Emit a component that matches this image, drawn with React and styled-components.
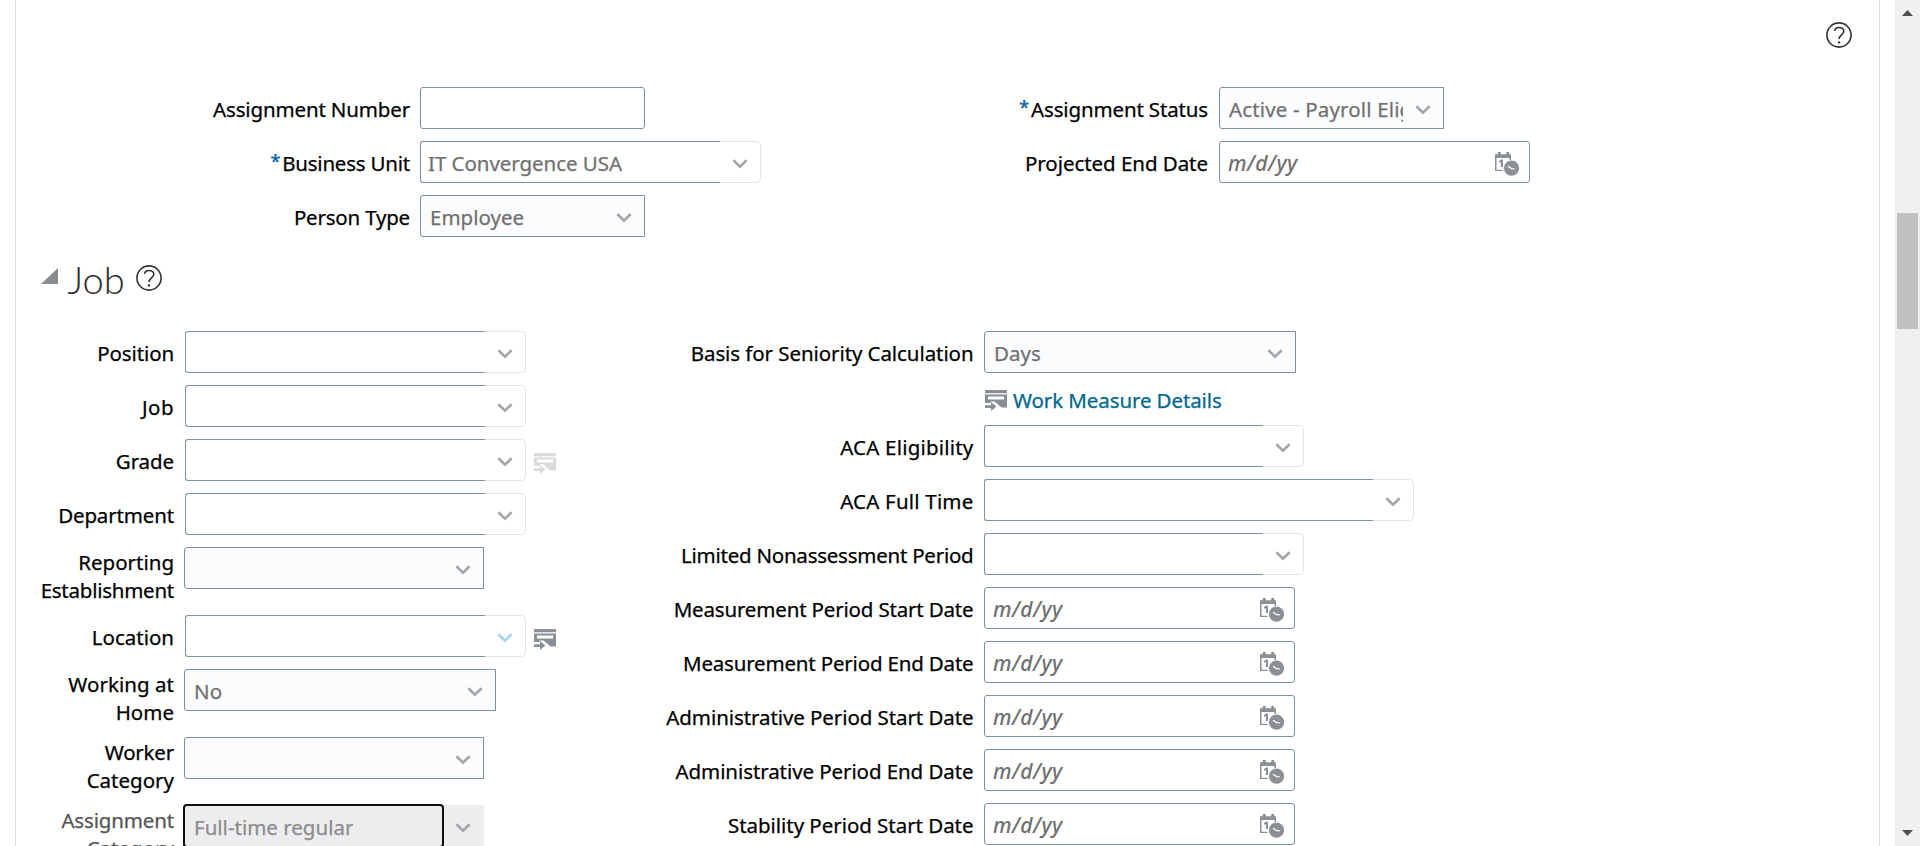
import React from "react";
import styled, { createGlobalStyle, css } from "styled-components";

const GlobalStyle = createGlobalStyle`
  * { box-sizing: border-box; }
  body {
    margin: 0;
    overflow: hidden;
    background: #fff;
    font-family: "Noto Sans", "Open Sans", sans-serif;
    font-size: 20.5px;
    line-height: 28px;
    color: #000;
  }
`;

const Page = styled.div`
  display: flex;
  height: 846px;
  overflow: hidden;
`;

const Panel = styled.main`
  flex: 1;
  min-width: 0;
  margin: 0 15px;
  border: solid #d8dfe6;
  border-width: 0 1px;
`;

const PanelHeader = styled.header`
  display: flex;
  justify-content: flex-end;
  height: 87px;
  padding: 21.5px 27px 0 0;
`;

const Form = styled.section`
  display: flex;
`;

const Column = styled.div`
  flex: none;
  width: ${(p) => p.$width}px;
`;

const Row = styled.div`
  display: flex;
  align-items: flex-start;
  height: ${(p) => p.$height || 54}px;
`;

const Label = styled.label`
  flex: none;
  width: ${(p) => p.$width}px;
  padding-top: ${(p) => (p.$tall ? 1 : 8)}px;
  margin-right: ${(p) => p.$gap}px;
  text-align: right;
  white-space: nowrap;
  color: ${(p) => (p.$muted ? "#555" : "#000")};
  -webkit-text-stroke: 0.25px;
`;

const Line = styled.span`
  display: block;
  letter-spacing: ${(p) => p.$track || 0}px;
`;

const Required = styled.span`
  margin-right: 2px;
  font-size: 18px;
  font-weight: 500;
  line-height: 0;
  vertical-align: 3px;
  color: #0a62a8;
`;

const fieldBox = css`
  display: flex;
  flex: none;
  height: 42px;
  width: ${(p) => p.$width}px;
`;

const TextBox = styled.div`
  ${fieldBox}
  border: 1px solid #7b929e;
  border-radius: 3px;
`;

const DateBox = styled(TextBox)`
  justify-content: space-between;
  padding: 0 10px 0 8px;
`;

const Placeholder = styled.span`
  padding-top: 7px;
  font-size: 21px;
  font-style: italic;
  font-weight: 500;
  letter-spacing: 0.45px;
  color: #707070;
`;

const SelectBox = styled.div`
  ${fieldBox}
  align-items: center;
  justify-content: space-between;
  padding: 0 12px 0 9px;
  margin-left: ${(p) => p.$shift || 0}px;
  border: 1px solid #7b929e;
  border-radius: 3px 0 0 3px;
  background: #fbfcfe;
`;

const Value = styled.span`
  width: ${(p) => (p.$width ? `${p.$width}px` : "auto")};
  padding-top: 2px;
  overflow: hidden;
  white-space: nowrap;
  letter-spacing: ${(p) => p.$track || 0}px;
  color: ${(p) => (p.$muted ? "#8c8c8c" : "#707070")};
  -webkit-text-stroke: 0.25px;
`;

const ComboBox = styled.div`
  ${fieldBox}
`;

const ComboInput = styled.div`
  display: flex;
  align-items: center;
  flex: 1;
  padding-left: 7px;
  border: solid #7b929e;
  border-width: 1px 0 1px 1px;
  border-radius: 3px 0 0 3px;
`;

const ComboButton = styled.div`
  display: flex;
  align-items: center;
  justify-content: flex-end;
  width: 41px;
  padding-right: 12px;
  border: solid #dfe5e9;
  border-width: 1px 1px 1px 0;
  border-radius: 0 5px 5px 0;
`;

const DisabledBox = styled.div`
  ${fieldBox}
  align-items: center;
  justify-content: space-between;
  padding-right: 13px;
  margin-left: -1px;
  background: #ededef;
`;

const FocusFrame = styled.div`
  display: flex;
  align-items: center;
  width: 261px;
  height: 44px;
  margin: -1px 0 -1px -1px;
  padding-left: 9px;
  border: 2px solid #101010;
  border-radius: 4px;
`;

const ChevronIcon = styled.svg`
  flex: none;
  margin-top: 3px;
`;

const IconSlot = styled.span`
  display: flex;
  padding: 14px 0 0 8px;
`;

const DateIconSlot = styled.span`
  display: flex;
  padding-top: 10px;
`;

const Link = styled.a`
  display: flex;
  gap: 6px;
  padding: 1px 0 0 1px;
  letter-spacing: -0.1px;
  color: #00688c;
  -webkit-text-stroke: 0.25px;
  svg { margin-top: 4px; }
`;

const SectionHeader = styled.div`
  display: flex;
  align-items: flex-start;
  height: 82px;
  padding: 2px 0 0 25px;
`;

const Disclosure = styled.svg`
  margin-top: 17px;
`;

const SectionTitle = styled.h2`
  margin: 4px 11px 0 9.5px;
  font: 300 38px/48px Lato, "Open Sans", sans-serif;
  color: #2b2b2b;
`;

const TitleHelp = styled.span`
  display: flex;
  padding-top: 13.5px;
`;

const Scrollbar = styled.aside`
  display: flex;
  flex-direction: column;
  justify-content: space-between;
  align-items: center;
  width: 25px;
  padding: 10px 0;
  background: #f0f0f0;
`;

const Thumb = styled.div`
  width: 21px;
  height: 116px;
  margin: 197px 0 auto;
  background: #c1c1c1;
`;

const Help = () => (
  <svg width="26" height="26" viewBox="0 0 26 26" fill="none" stroke="#35312f">
    <circle cx="13" cy="13" r="12.1" strokeWidth="1.6" />
    <path d="M8.6 8.900C8.900 6.700 10.600 5.500 13 5.500c2.900 0 4.800 1.500 4.800 3.800 0 3.500-4.700 3.900-4.700 7.700" strokeWidth="1.6" />
    <circle cx="13" cy="20.400" r="1.200" fill="#35312f" stroke="none" />
  </svg>
);

const Chevron = ({ color = "#a3a6a8" }) => (
  <ChevronIcon width="16" height="10" viewBox="0 0 16 10" fill="none">
    <path d="M1.400 1.200L8 7.600l6.600-6.400" stroke={color} strokeWidth="2.600" />
  </ChevronIcon>
);

const Details = ({ faded }) => (
  <svg width="22" height="21" viewBox="0 0 22 21" fill={faded ? "#d8dadb" : "#8a9095"}>
    <path d="M1 0h20q1 0 1 1v2.300H0V1q0-1 1-1z" />
    <path fillRule="evenodd" d="M0 4.500h22v13H16.500L9.500 11.500H5.500v1.500H0zM3 6.600v3h16v-3z" />
    <path d="M0 15.200h6v-3.200l5.400 4.600L6 21v-3H0z" />
  </svg>
);

const CalendarClock = () => (
  <svg width="24" height="24" viewBox="0 0 24 24">
    <path fill="#8a9095" d="M2.800 0h2.900v2.300h5.600V0h2.900v2.300H16V8h-1.500V6h-13v11.700h6V19H0V2.300h2.800z" />
    <path fill="#8a9095" d="M4 9l2.300-1.500H8V15H5.900V9.900L4 10.800z" />
    <circle cx="16.500" cy="16.200" r="7.600" fill="#8a9095" />
    <path d="M13 14.200l3.500 2.400 3.300.2" fill="none" stroke="#fff" strokeWidth="1.300" />
  </svg>
);

const Field = ({ f, labelWidth, gap }) => (
  <Row $height={f.height}>
    <Label $width={labelWidth} $gap={gap} $tall={f.lines.length !== 1} $muted={f.kind === "disabled"}>
      {f.lines.map(([text, track]) => (
        <Line key={text} $track={track}>
          {f.required && <Required>*</Required>}
          {text}
        </Line>
      ))}
    </Label>
    {f.kind === "text" && <TextBox $width={f.width} />}
    {f.kind === "date" && (
      <DateBox $width={f.width}>
        <Placeholder>m/d/yy</Placeholder>
        <DateIconSlot><CalendarClock /></DateIconSlot>
      </DateBox>
    )}
    {f.kind === "select" && (
      <SelectBox $width={f.width} $shift={f.shift}>
        <Value $track={f.track} $width={f.clip}>{f.value}</Value>
        <Chevron />
      </SelectBox>
    )}
    {f.kind === "combo" && (
      <ComboBox $width={f.width}>
        <ComboInput><Value $track={f.track}>{f.value}</Value></ComboInput>
        <ComboButton><Chevron color={f.active ? "#a5d1f3" : undefined} /></ComboButton>
      </ComboBox>
    )}
    {f.kind === "disabled" && (
      <DisabledBox $width={f.width}>
        <FocusFrame><Value $muted>{f.value}</Value></FocusFrame>
        <Chevron />
      </DisabledBox>
    )}
    {f.kind === "link" && <Link><Details />{f.value}</Link>}
    {f.details && <IconSlot><Details faded={f.details === "faded"} /></IconSlot>}
  </Row>
);

const Fields = ({ items, width, labelWidth, gap }) => (
  <Column $width={width}>
    {items.map((f, i) => <Field key={i} f={f} labelWidth={labelWidth} gap={gap} />)}
  </Column>
);

const assignmentLeft = [
  { lines: [["Assignment Number", -0.15]], kind: "text", width: 225 },
  { lines: [["Business Unit", -0.22]], required: true, kind: "combo", width: 341, value: "IT Convergence USA", track: -0.05 },
  { lines: [["Person Type", -0.2]], kind: "select", width: 225, value: "Employee" },
];

const assignmentRight = [
  { lines: [["Assignment Status", -0.15]], required: true, kind: "select", width: 225, value: "Active - Payroll Eligible", track: 0.15, clip: 174 },
  { lines: [["Projected End Date", -0.05]], kind: "date", width: 311 },
];

const jobLeft = [
  { lines: [["Position", -0.1]], kind: "combo", width: 341 },
  { lines: [["Job", 0.5]], kind: "combo", width: 341 },
  { lines: [["Grade", -0.1]], kind: "combo", width: 341, details: "faded" },
  { lines: [["Department", -0.15]], kind: "combo", width: 341 },
  { lines: [["Reporting"], ["Establishment", -0.25]], height: 68, kind: "select", width: 300, shift: -1 },
  { lines: [["Location"]], kind: "combo", width: 341, active: true, details: "solid" },
  { lines: [["Working at", 0.05], ["Home"]], height: 68, kind: "select", width: 312, shift: -1, value: "No", track: 0.1 },
  { lines: [["Worker", -0.2], ["Category"]], height: 68, kind: "select", width: 300, shift: -1 },
  { lines: [["Assignment", -0.15], ["Category"]], height: 68, kind: "disabled", width: 300, value: "Full-time regular" },
];

const jobRight = [
  { lines: [["Basis for Seniority Calculation", -0.08]], kind: "select", width: 312, value: "Days" },
  { lines: [], height: 40, kind: "link", value: "Work Measure Details" },
  { lines: [["ACA Eligibility", 0.2]], kind: "combo", width: 320 },
  { lines: [["ACA Full Time", 0.2]], kind: "combo", width: 430 },
  { lines: [["Limited Nonassessment Period", -0.24]], kind: "combo", width: 320 },
  { lines: [["Measurement Period Start Date", -0.17]], kind: "date", width: 311 },
  { lines: [["Measurement Period End Date", -0.18]], kind: "date", width: 311 },
  { lines: [["Administrative Period Start Date", -0.08]], kind: "date", width: 311 },
  { lines: [["Administrative Period End Date", -0.08]], kind: "date", width: 311 },
  { lines: [["Stability Period Start Date", -0.04]], kind: "date", width: 311 },
];

export default function App() {
  return (
    <Page>
      <GlobalStyle />
      <Panel>
        <PanelHeader><Help /></PanelHeader>
        <Form>
          <Fields items={assignmentLeft} width={834} labelWidth={394} gap={10} />
          <Fields items={assignmentRight} width={700} labelWidth={358} gap={11} />
        </Form>
        <SectionHeader>
          <Disclosure width="17" height="16" viewBox="0 0 17 16">
            <path d="M17 0v16H0z" fill="#878c91" />
          </Disclosure>
          <SectionTitle>Job</SectionTitle>
          <TitleHelp><Help /></TitleHelp>
        </SectionHeader>
        <Form>
          <Fields items={jobLeft} width={584} labelWidth={158} gap={11} />
          <Fields items={jobRight} width={900} labelWidth={373.5} gap={10.5} />
        </Form>
      </Panel>
      <Scrollbar>
        <svg width="11" height="6" viewBox="0 0 11 6"><path d="M5.500 0L11 6H0z" fill="#505050" /></svg>
        <Thumb />
        <svg width="11" height="6" viewBox="0 0 11 6"><path d="M5.500 6L11 0H0z" fill="#505050" /></svg>
      </Scrollbar>
    </Page>
  );
}
